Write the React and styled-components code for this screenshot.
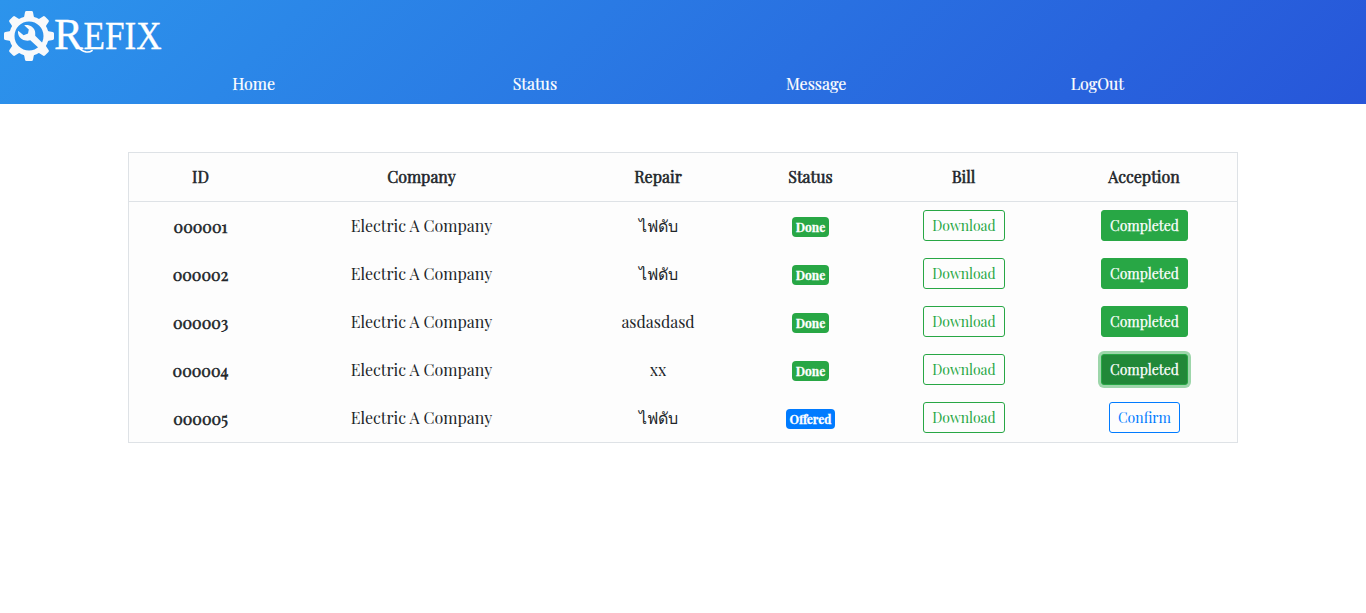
import React from "react";
import styled, { createGlobalStyle, css } from "styled-components";

const Global = createGlobalStyle`
  *, *::before, *::after { box-sizing: border-box; }
  body {
    margin: 0;
    background: #fff;
    color: #212529;
    font-family: "Playfair Display", "Liberation Serif", serif;
    font-size: 16px;
    line-height: 24px;
  }
`;

const Header = styled.header`
  height: 104px;
  background: linear-gradient(135deg, #2c94ec 0%, #2756d9 100%);
  color: #fff;
`;

const Brand = styled.a`
  display: block;
  height: 64px;
  svg { display: block; overflow: visible; }
`;

const Nav = styled.nav`
  display: grid;
  grid-template-columns: repeat(4, 1fr);
  width: 1125px;
  margin-left: 113px;
  padding-top: 8px;
`;

const NavLink = styled.a`
  color: #fff;
  text-align: center;
  -webkit-text-stroke: 0.2px currentColor;
`;

const Table = styled.table`
  width: 1110px;
  margin: 48px 0 0 128px;
  table-layout: fixed;
  border-collapse: separate;
  border-spacing: 0;
  border: 1px solid #dee2e6;
  background: #fdfdfd;
  text-align: center;
`;

const Col = styled.col`
  width: ${(p) => p.$w}px;
`;

const HeadCell = styled.th`
  height: 49px;
  padding: 0;
  border-bottom: 1px solid #dee2e6;
  font-weight: 400;
  -webkit-text-stroke: 0.55px currentColor;
`;

const Cell = styled.td`
  height: 48px;
  padding: 0 0 1px;
  vertical-align: middle;
`;

const IdCell = styled.th`
  height: 48px;
  padding: 1px 0 0;
  font-weight: 400;
  -webkit-text-stroke: 0.55px currentColor;
`;

const Badge = styled.span`
  display: block;
  width: ${(p) => (p.$blue ? 49 : 37)}px;
  height: 20px;
  margin: 3px auto 0;
  border-radius: 4px;
  background: ${(p) => (p.$blue ? "#007bff" : "#28a745")};
  color: #fff;
  font-size: 12px;
  font-weight: 700;
  line-height: 20px;
  -webkit-text-stroke: 0.3px currentColor;
`;

const Button = styled.button`
  display: block;
  width: ${(p) => p.$w}px;
  height: 31px;
  margin: 0 auto;
  padding: 0 0 1px 1px;
  border: 1px solid ${(p) => p.$color};
  border-radius: 3px;
  background: transparent;
  color: ${(p) => p.$color};
  font: 14px/21px "Playfair Display", "Liberation Serif", serif;
  white-space: nowrap;
  ${(p) => p.$solid && css`
    background: #28a745;
    color: #fff;
    -webkit-text-stroke: 0.25px currentColor;
  `}
  ${(p) => p.$focused && css`
    background: #218838;
    box-shadow: 0 0 0 3px rgba(40, 167, 69, 0.45);
  `}
`;

const teeth = [0, 45, 90, 135, 180, 225, 270, 315];

function Logo() {
  return (
    <svg width="200" height="64" viewBox="0 0 200 64" role="img" aria-label="Refix">
      <g fill="#f8f9fb">
        {teeth.map((a) => (
          <path
            key={a}
            transform={`rotate(${a} 29 36)`}
            d="M22 20 L24.2 16.5 L25 12.3 Q25.2 11 26.5 11 H31.5 Q32.8 11 33 12.3 L33.8 16.5 L36 20 Z"
          />
        ))}
        <path
          fillRule="evenodd"
          d="M29 16.3a19.7 19.7 0 1 0 0 39.4a19.7 19.7 0 1 0 0-39.4zM29 21.5a14.5 14.5 0 1 1 0 29a14.5 14.5 0 1 1 0-29z"
        />
        <path d="M24.2 25.2C29 24.1 34 26.8 35 31.2C35.4 33.2 35.2 35 35.2 35.8L44 44.5L39.3 48.6L30.3 40.2C26 41.6 20.3 39.6 18.6 35.2C18 33.6 17.8 32 18.2 30.8L23.6 35.3L28 33.6L28.8 29.4Z" />
      </g>
      <g fill="#fff" stroke="#fff" strokeWidth="0.35" fontFamily="'Liberation Serif', serif">
        <text x="54" y="49" fontSize="44" textLength="29" lengthAdjust="spacingAndGlyphs">R</text>
        <text x="83.5" y="49" fontSize="39.5" textLength="78" lengthAdjust="spacingAndGlyphs">EFIX</text>
      </g>
      <path d="M77 45.5C80 49.5 82.5 51.4 86 51.9C88.5 52.2 90.5 51.8 92 50.6" fill="none" stroke="#fff" strokeWidth="1.7" strokeLinecap="round" />
    </svg>
  );
}

const columns = [
  ["ID", 143],
  ["Company", 299],
  ["Repair", 174],
  ["Status", 131],
  ["Bill", 175],
  ["Acception", 186],
];

const rows = [
  { id: "000001", repair: "ไฟดับ" },
  { id: "000002", repair: "ไฟดับ" },
  { id: "000003", repair: "asdasdasd" },
  { id: "000004", repair: "xx", focused: true },
  { id: "000005", repair: "ไฟดับ", offered: true },
];

export default function App() {
  return (
    <>
      <Global />
      <Header>
        <Brand><Logo /></Brand>
        <Nav>
          <NavLink>Home</NavLink>
          <NavLink>Status</NavLink>
          <NavLink>Message</NavLink>
          <NavLink>LogOut</NavLink>
        </Nav>
      </Header>
      <Table>
        <colgroup>
          {columns.map(([name, w]) => <Col key={name} $w={w} />)}
        </colgroup>
        <thead>
          <tr>
            {columns.map(([name]) => <HeadCell key={name}>{name}</HeadCell>)}
          </tr>
        </thead>
        <tbody>
          {rows.map((r) => (
            <tr key={r.id}>
              <IdCell>{r.id}</IdCell>
              <Cell>Electric A Company</Cell>
              <Cell>{r.repair}</Cell>
              <Cell><Badge $blue={r.offered}>{r.offered ? "Offered" : "Done"}</Badge></Cell>
              <Cell><Button $w={82} $color="#28a745">Download</Button></Cell>
              <Cell>
                {r.offered
                  ? <Button $w={71} $color="#007bff">Confirm</Button>
                  : <Button $w={87} $color="#28a745" $solid $focused={r.focused}>Completed</Button>}
              </Cell>
            </tr>
          ))}
        </tbody>
      </Table>
    </>
  );
}
